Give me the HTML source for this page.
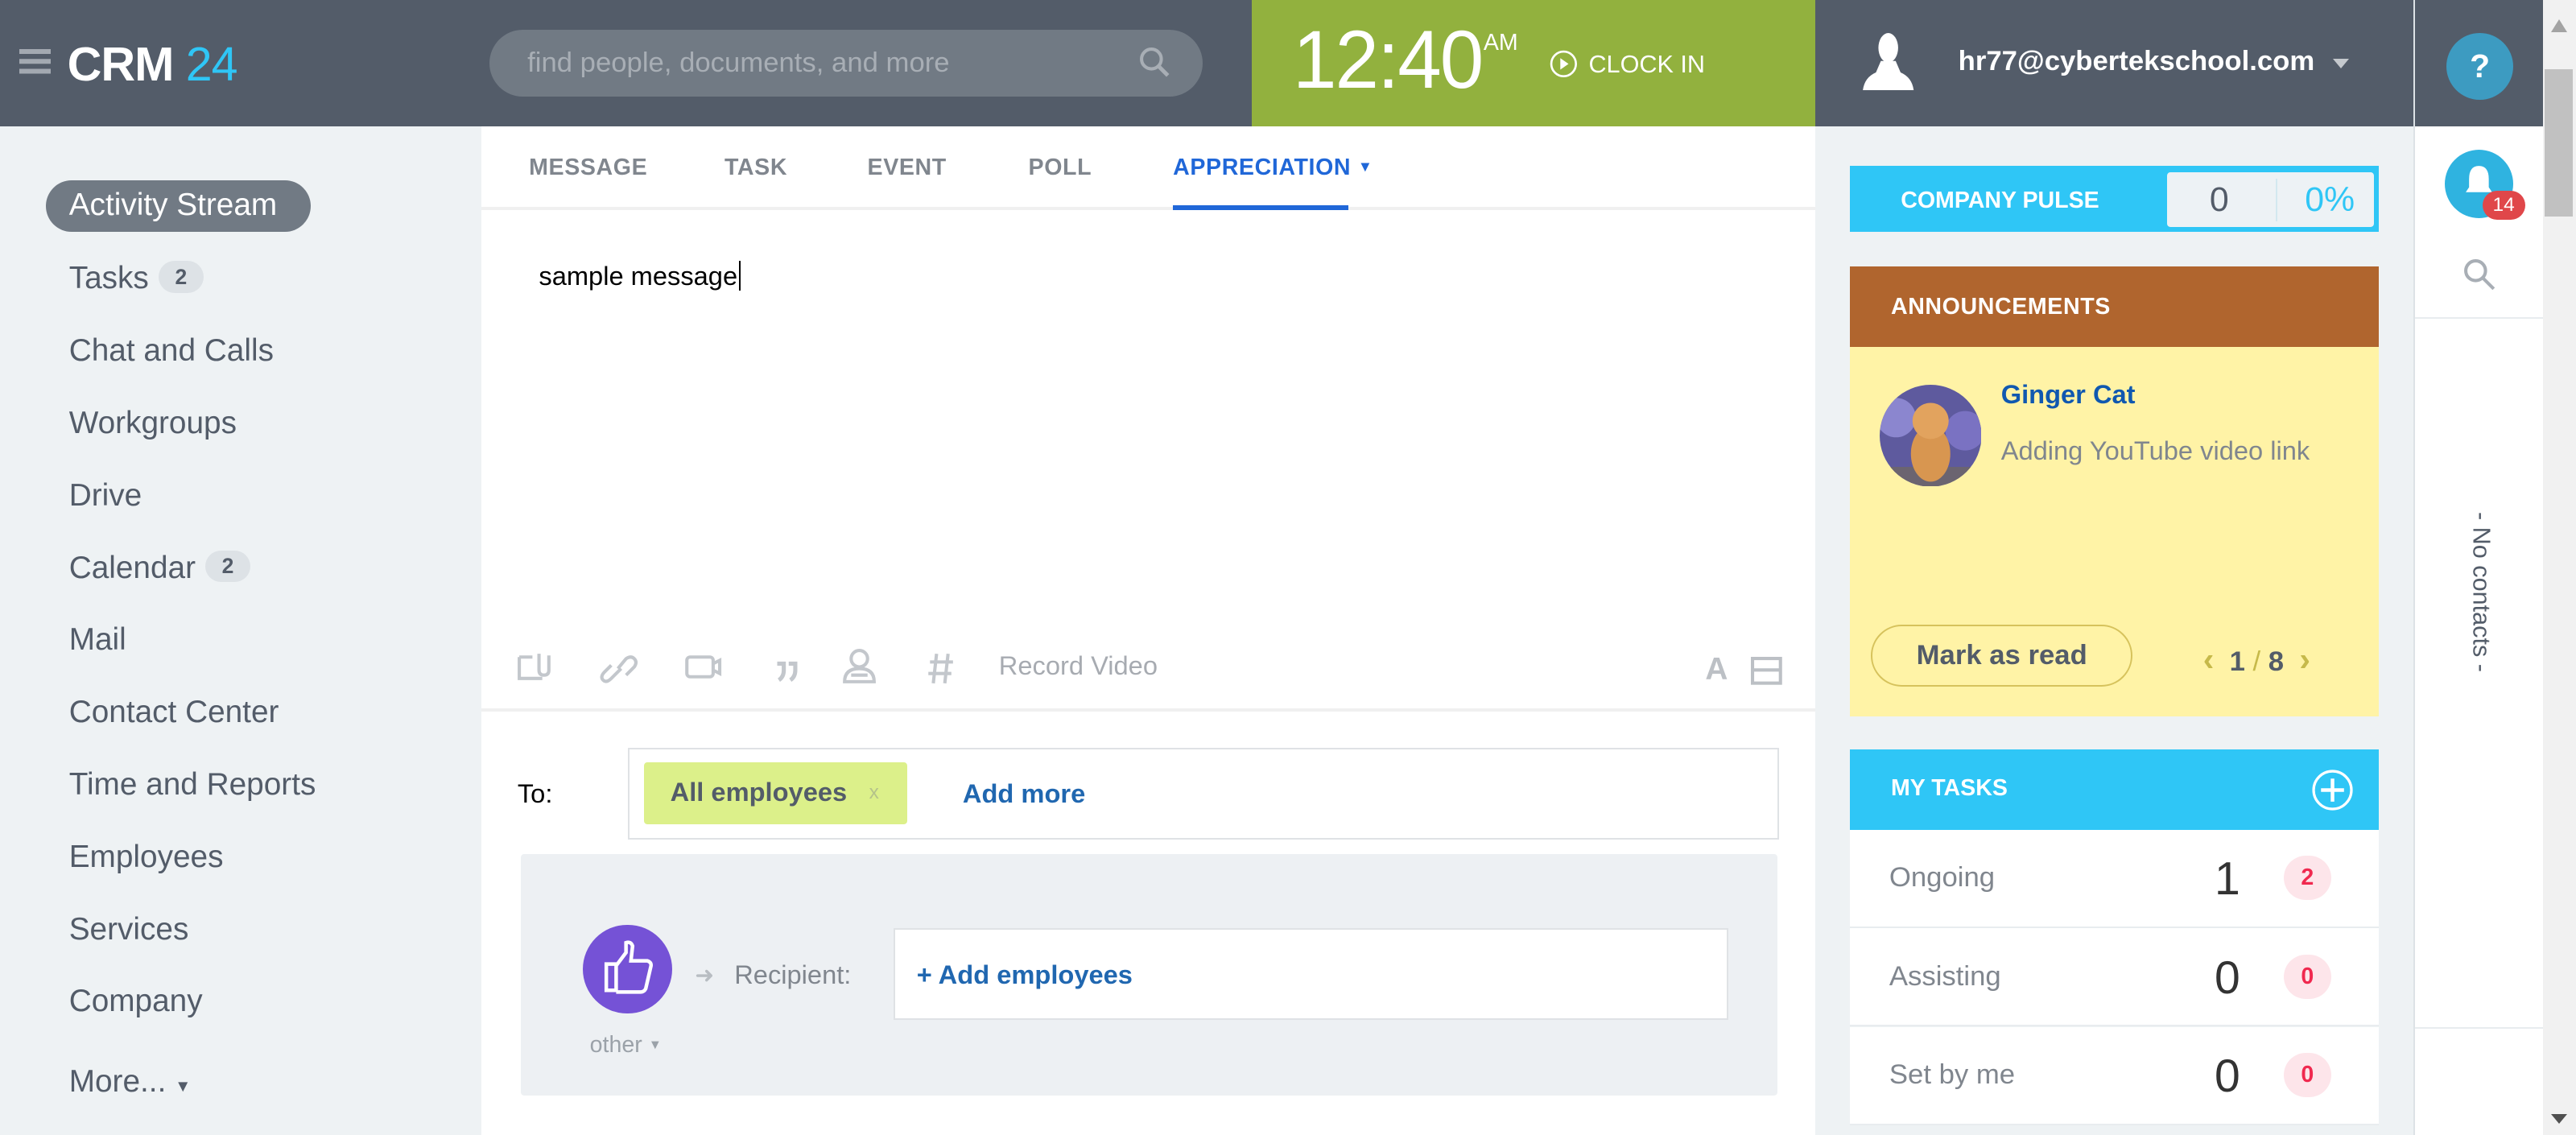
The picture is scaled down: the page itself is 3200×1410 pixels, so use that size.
<!DOCTYPE html>
<html><head><meta charset="utf-8"><style>
*{margin:0;padding:0;box-sizing:border-box}
html,body{width:3200px;height:1410px;overflow:hidden;background:#fff}
#r{zoom:2.0408;width:1568px;height:691px;position:relative;font-family:"Liberation Sans",Arial,sans-serif;overflow:hidden}
.a{position:absolute}
.nav{font-size:19px;color:#535c69;left:42px}
.cnt{display:inline-block;background:#dde2e6;color:#535c69;font-size:13px;font-weight:bold;border-radius:10px;padding:2px 10px;margin-left:6px;vertical-align:3px}
.tab{top:94px;font-size:14px;font-weight:bold;color:#80868e;letter-spacing:.3px}
.row{left:1126px;width:322px;height:60px;background:#fff;border-bottom:1px solid #e8ecef}
.row .l{position:absolute;left:24px;top:20px;font-size:17px;color:#80868e}
.row .n{position:absolute;left:222px;top:14px;font-size:28px;color:#333;font-weight:300}
.row .b{position:absolute;left:264px;top:16px;width:29px;height:27px;border-radius:14px;background:#fde5ea;color:#f0294f;font-weight:bold;font-size:14px;text-align:center;line-height:27px}
</style></head><body><div id="r">
<div class="a" style="left:0;top:0;width:1548px;height:77px;background:#535c69"></div>
<div class="a" style="left:12px;top:30px;width:19px;height:3px;background:#a3a9b1;box-shadow:0 6px 0 #a3a9b1,0 12px 0 #a3a9b1"></div>
<div class="a" style="left:41px;top:22px;font-size:29px;color:#fff;font-weight:bold;letter-spacing:-.5px">CRM <span style="color:#2fc6f6;font-weight:normal">24</span></div>
<div class="a" style="left:298px;top:18px;width:434px;height:41px;border-radius:21px;background:#717a84"></div>
<div class="a" style="left:321px;top:29px;font-size:17px;color:#a8aeb5">find people, documents, and more</div>
<svg class="a" style="left:693px;top:28px" width="20" height="20" viewBox="0 0 20 20"><circle cx="8" cy="8" r="6" fill="none" stroke="#a8aeb5" stroke-width="2"/><path d="M12.5 12.5L18 18" stroke="#a8aeb5" stroke-width="2.4"/></svg>
<div class="a" style="left:762px;top:0;width:343px;height:77px;background:#92b13e"></div>
<div class="a" style="left:787px;top:8px;font-size:50px;color:#fff;letter-spacing:-1px;transform:scaleX(.96);transform-origin:left">12:40</div>
<div class="a" style="left:903px;top:18px;font-size:14px;color:#fff">AM</div>
<svg class="a" style="left:943px;top:30px" width="18" height="18"><circle cx="9" cy="9" r="7.5" fill="none" stroke="#fff" stroke-width="1.3"/><path d="M7 5.5L12 9L7 12.5Z" fill="#fff"/></svg>
<div class="a" style="left:967px;top:31px;font-size:15px;color:#fff">CLOCK IN</div>
<svg class="a" style="left:1133px;top:19px" width="33" height="36"><ellipse cx="16.5" cy="10" rx="6" ry="9" fill="#fff"/><path d="M12 18 L9 25 Q2 28 1 36 L32 36 Q31 28 24 25 L21 18Z" fill="#fff"/></svg>
<div class="a" style="left:1192px;top:28px;font-size:17px;color:#fff;font-weight:bold">hr77@cyberteksсhool.com</div>
<div class="a" style="left:1420px;top:36px;border:5px solid transparent;border-top:6px solid #c4c8cd"></div>
<div class="a" style="left:1469px;top:0;width:1px;height:691px;background:#dde2e6"></div>
<div class="a" style="left:1489px;top:20px;width:41px;height:41px;border-radius:50%;background:#3d9bc1;color:#fff;font-weight:bold;font-size:20px;text-align:center;line-height:41px">?</div>
<div class="a" style="left:1548px;top:0;width:20px;height:691px;background:#f1f1f1"></div>
<div class="a" style="left:1549px;top:42px;width:17px;height:90px;background:#c1c1c1"></div>
<div class="a" style="left:1553px;top:12px;border:5px solid transparent;border-bottom:8px solid #a3a3a3;border-top:0"></div>
<div class="a" style="left:1553px;top:678px;border:5px solid transparent;border-top:6px solid #505050;border-bottom:0"></div>
<div class="a" style="left:0;top:77px;width:293px;height:614px;background:#eef2f4"></div>
<div class="a" style="left:28px;top:110px;width:161px;height:31px;border-radius:16px;background:#717a84;color:#fff;font-size:19px;line-height:30px;padding-left:14px">Activity Stream</div>
<div class="a nav" style="top:159px">Tasks<span class="cnt">2</span></div>
<div class="a nav" style="top:203px">Chat and Calls</div>
<div class="a nav" style="top:247px">Workgroups</div>
<div class="a nav" style="top:291px">Drive</div>
<div class="a nav" style="top:335px">Calendar<span class="cnt">2</span></div>
<div class="a nav" style="top:379px">Mail</div>
<div class="a nav" style="top:423px">Contact Center</div>
<div class="a nav" style="top:467px">Time and Reports</div>
<div class="a nav" style="top:511px">Employees</div>
<div class="a nav" style="top:555px">Services</div>
<div class="a nav" style="top:599px">Company</div>
<div class="a nav" style="top:648px">More... <span style="font-size:10px">&#9660;</span></div>
<div class="a tab" style="left:322px">MESSAGE</div>
<div class="a tab" style="left:441px">TASK</div>
<div class="a tab" style="left:528px">EVENT</div>
<div class="a tab" style="left:626px">POLL</div>
<div class="a tab" style="left:714px;color:#2067d8">APPRECIATION <span style="font-size:9px;vertical-align:2px">&#9660;</span></div>
<div class="a" style="left:293px;top:126px;width:812px;height:2px;background:#f0f0f0"></div>
<div class="a" style="left:714px;top:125px;width:107px;height:3px;background:#2067d8"></div>
<div class="a" style="left:328px;top:159px;font-size:16px;color:#000">sample message<span style="border-left:1px solid #000;margin-left:1px"></span></div>
<svg class="a" style="left:314px;top:394px" width="400" height="24" fill="none" stroke="#c3c7cc" stroke-width="2">
<path d="M2 6v13h14M2 6h8M14 4v10q0 3 3 3t3-3V5"/>
<path d="M58 19l6-6M62 13l5-6q3-2 5 0t0 5l-5 5M58 19q-3 3-5 1t1-5l4-4"/>
<rect x="104" y="6" width="16" height="12" rx="2"/><path d="M120 10l4-2v8l-4-2"/>
<path d="M159 10h4v4q0 4-3 6M166 10h4v4q0 4-3 6" stroke-width="2.5"/>
<circle cx="209" cy="7" r="5"/><path d="M200 21q0-8 9-8t9 8zM204 17h10"/>
<path d="M256 4l-2 18M263 4l-2 18M252 9h14M251 16h14"/>
</svg>
<div class="a" style="left:608px;top:396px;font-size:16px;color:#a7abb1">Record Video</div>
<div class="a" style="left:1038px;top:397px;font-size:19px;font-weight:bold;color:#bcc0c5">A</div>
<svg class="a" style="left:1066px;top:400px" width="20" height="18" fill="none" stroke="#bcc0c5" stroke-width="2"><rect x="1" y="1" width="17" height="15"/><path d="M1 8h17"/></svg>
<div class="a" style="left:293px;top:431px;width:812px;height:2px;background:#f0f0f0"></div>
<div class="a" style="left:315px;top:474px;font-size:16px;color:#000">To:</div>
<div class="a" style="left:382px;top:455px;width:701px;height:56px;border:1px solid #dfe2e5;background:#fff"></div>
<div class="a" style="left:392px;top:464px;width:160px;height:38px;background:#dcf08a;border-radius:2px"></div>
<div class="a" style="left:408px;top:473px;font-size:16px;color:#535c69;font-weight:bold">All employees</div>
<div class="a" style="left:529px;top:476px;font-size:12px;color:#b5c38a">x</div>
<div class="a" style="left:586px;top:474px;font-size:16px;color:#2067b0;font-weight:bold">Add more</div>
<div class="a" style="left:317px;top:520px;width:765px;height:147px;background:#edf0f3;border-radius:2px"></div>
<div class="a" style="left:355px;top:563px;width:54px;height:54px;border-radius:50%;background:#7552d6"></div>
<svg class="a" style="left:365px;top:571px" width="34" height="38" fill="none" stroke="#fff" stroke-width="2.2"><path d="M4 16h6v16H4zM10 17l6-8V3q3-1 4 2l-1 9h10q3 1 2 4l-3 13q-1 2-3 2H10"/></svg>
<div class="a" style="left:359px;top:628px;font-size:14px;color:#9ba2a9">other <span style="font-size:8px;vertical-align:2px">&#9660;</span></div>
<div class="a" style="left:423px;top:585px;font-size:14px;color:#b8bdc2">&#10140;</div>
<div class="a" style="left:447px;top:584px;font-size:16px;color:#80868e">Recipient:</div>
<div class="a" style="left:544px;top:565px;width:508px;height:56px;border:1px solid #dfe2e5;background:#fff"></div>
<div class="a" style="left:558px;top:584px;font-size:16px;color:#2067b0;font-weight:bold">+ Add employees</div>
<div class="a" style="left:1105px;top:77px;width:364px;height:614px;background:#eef2f4"></div>
<div class="a" style="left:1126px;top:101px;width:322px;height:40px;background:#2fc6f6"></div>
<div class="a" style="left:1157px;top:114px;font-size:14px;color:#fff;font-weight:bold">COMPANY PULSE</div>
<div class="a" style="left:1319px;top:105px;width:126px;height:33px;background:#edf2f5;border-radius:2px"></div>
<div class="a" style="left:1385px;top:109px;width:1px;height:26px;background:#d3e8f0"></div>
<div class="a" style="left:1345px;top:110px;font-size:21px;color:#535c69">0</div>
<div class="a" style="left:1403px;top:110px;font-size:21px;color:#2fc6f6">0%</div>
<div class="a" style="left:1126px;top:162px;width:322px;height:49px;background:#b0652e"></div>
<div class="a" style="left:1151px;top:179px;font-size:14px;color:#fff;font-weight:bold;letter-spacing:.3px">ANNOUNCEMENTS</div>
<div class="a" style="left:1126px;top:211px;width:322px;height:225px;background:#fff3a6"></div>
<svg class="a" style="left:1144px;top:234px" width="62" height="62"><defs><clipPath id="c"><circle cx="31" cy="31" r="31"/></clipPath></defs><g clip-path="url(#c)"><rect width="62" height="62" fill="#5e5a9e"/><circle cx="10" cy="20" r="12" fill="#8b86cf"/><circle cx="52" cy="28" r="12" fill="#7a72c2"/><rect x="0" y="50" width="62" height="12" fill="#6b6470"/><ellipse cx="31" cy="42" rx="12" ry="17" fill="#d89650"/><circle cx="31" cy="22" r="11" fill="#e2a35e"/></g></svg>
<div class="a" style="left:1218px;top:231px;font-size:16px;color:#1058b0;font-weight:bold">Ginger Cat</div>
<div class="a" style="left:1218px;top:265px;font-size:16px;color:#80868e">Adding YouTube video link</div>
<div class="a" style="left:1139px;top:380px;width:159px;height:38px;border:1px solid #d6c25c;border-radius:20px;font-size:17px;font-weight:bold;color:#535c69;text-align:center;line-height:36px">Mark as read</div>
<div class="a" style="left:1341px;top:390px;font-size:17px;font-weight:bold;color:#535c69"><span style="color:#c6b94a;font-size:20px">&#8249;</span>&nbsp;&nbsp;1 <span style="color:#c6b94a;font-weight:normal">/</span> 8&nbsp;&nbsp;<span style="color:#c6b94a;font-size:20px">&#8250;</span></div>
<div class="a" style="left:1126px;top:456px;width:322px;height:49px;background:#2fc6f6"></div>
<div class="a" style="left:1151px;top:472px;font-size:14px;color:#fff;font-weight:bold">MY TASKS</div>
<svg class="a" style="left:1407px;top:468px" width="26" height="26" fill="none" stroke="#fff" stroke-width="1.6"><circle cx="13" cy="13" r="11.5"/><path d="M13 6v14M6 13h14" stroke-width="2.2"/></svg>
<div class="a row" style="top:505px"><span class="l">Ongoing</span><span class="n">1</span><span class="b">2</span></div>
<div class="a row" style="top:565px"><span class="l">Assisting</span><span class="n">0</span><span class="b">0</span></div>
<div class="a row" style="top:625px"><span class="l">Set by me</span><span class="n">0</span><span class="b">0</span></div>
<div class="a" style="left:1470px;top:77px;width:78px;height:614px;background:#fff"></div>
<div class="a" style="left:1488px;top:91px;width:42px;height:42px;border-radius:50%;background:#2fb3e0"></div>
<svg class="a" style="left:1499px;top:99px" width="20" height="24"><path d="M10 2q6 0 6 8v5l2 3H2l2-3v-5q0-8 6-8z" fill="#fff"/></svg>
<div class="a" style="left:1511px;top:116px;width:26px;height:18px;border-radius:9px;background:#e0474a;color:#fff;font-size:12px;text-align:center;line-height:18px">14</div>
<svg class="a" style="left:1499px;top:157px" width="22" height="22" fill="none" stroke="#a8aeb5" stroke-width="2"><circle cx="8" cy="8" r="6"/><path d="M12.5 12.5L19 19"/></svg>
<div class="a" style="left:1470px;top:193px;width:78px;height:1px;background:#e8ecef"></div>
<div class="a" style="left:1470px;top:625px;width:78px;height:1px;background:#e8ecef"></div>
<div class="a" style="left:1460px;top:352px;width:100px;text-align:center;font-size:15px;color:#535c69;transform:rotate(90deg)">- No contacts -</div>
</div></body></html>
